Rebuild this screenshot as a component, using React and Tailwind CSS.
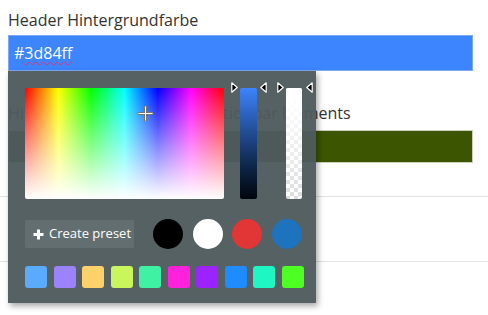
import React from "react";

const squares = ["#5aaaff", "#9b82ff", "#ffd16b", "#c9f75b", "#3ff2a3", "#ff22da", "#9c22ff", "#1e8bff", "#1ef7c3", "#4dff22"];
const circles = ["#000000", "#ffffff", "#e23535", "#1e73be"];

function Arrow({ dir, className }) {
  return (
    <svg width="7" height="11" viewBox="0 0 7 11" className={className}>
      {dir === "right" ? (
        <path d="M0.8 0.8 L6.2 5.5 L0.8 10.2 Z" fill="#000" stroke="#fff" strokeWidth="1.2" strokeLinejoin="round" />
      ) : (
        <path d="M6.2 0.8 L0.8 5.5 L6.2 10.2 Z" fill="#000" stroke="#fff" strokeWidth="1.2" strokeLinejoin="round" />
      )}
    </svg>
  );
}

export default function App() {
  return (
    <div className="relative h-[315px] w-[488px] overflow-hidden bg-white font-['Open_Sans',sans-serif] text-[#333]">
      <div className="px-2 pt-2">
        <div className="h-6 text-[16px] leading-6">Header Hintergrundfarbe</div>
        <div className="mt-[3px] flex h-9 w-[465px] items-center border border-[#7eaaf5] bg-[#3d84ff] px-[5px] text-[16px] text-white">
          #<span className="underline decoration-[#d9367a] decoration-wavy decoration-1 underline-offset-2">3d84ff</span>
        </div>
        <div className="mt-[30px] h-6 whitespace-nowrap text-[16px] leading-6">Hintergrundfarbe der Navigationbar Elements</div>
        <div className="mt-[5px] h-[33px] w-[465px] border border-[#c9d2b8] bg-[#3b5501]" />
      </div>
      <div className="mt-[33px] h-px bg-[#e2e2e2]" />
      <div className="mt-16 h-px bg-[#e2e2e2]" />

      <div className="absolute left-2 top-[71px] flex h-[232px] w-[308px] flex-col bg-[#4f5b5e]/[0.96] pl-[17px] pr-[14px] pt-[17px] shadow-[2px_3px_6px_rgba(0,0,0,0.35)]">
        <div className="flex h-[111px]">
          <div className="relative h-[111px] w-[199px] rounded-[2px] bg-[linear-gradient(to_right,#ff0000,#ffff00,#00ff00,#00ffff,#0000ff,#ff00ff,#ff0000)]">
            <div className="absolute inset-0 rounded-[2px] bg-linear-to-b from-transparent to-white" />
            <svg width="15" height="15" viewBox="0 0 15 15" className="absolute left-[113px] top-[18px]">
              <path d="M7.5 0 V15 M0 7.5 H15" stroke="#777" strokeWidth="3" />
              <path d="M7.5 0.5 V14.5 M0.5 7.5 H14.5" stroke="#fff" strokeWidth="1" />
            </svg>
          </div>
          <div className="relative ml-4 h-[111px] w-[17px] rounded-[2px] bg-linear-to-b from-[#3d84ff] to-[#02060d]">
            <Arrow dir="right" className="absolute -left-[9px] -top-[6px]" />
            <Arrow dir="left" className="absolute -right-[10px] -top-[6px]" />
          </div>
          <div className="relative ml-[29px] h-[111px] w-4 rounded-[2px] bg-[repeating-conic-gradient(#dcdcdc_0%_25%,#ffffff_0%_50%)] bg-[length:8px_8px]">
            <div className="absolute inset-0 rounded-[2px] bg-linear-to-b from-white from-10% to-transparent" />
            <Arrow dir="right" className="absolute -left-[9px] -top-[6px]" />
            <Arrow dir="left" className="absolute -right-[11px] -top-[6px]" />
          </div>
        </div>
        <div className="mt-5 flex h-[30px] items-center">
          <div className="flex h-7 w-[109px] items-center gap-[5px] rounded-[2px] bg-[#636e71] pl-2 text-[13px] text-white">
            <svg width="11" height="11" viewBox="0 0 11 11">
              <path d="M5.5 0.5 V10.5 M0.5 5.5 H10.5" stroke="#fff" strokeWidth="3" />
            </svg>
            <span>Create preset</span>
          </div>
          <div className="ml-[19px] flex gap-[9.5px]">
            {circles.map((c) => (
              <div key={c} className="h-[30px] w-[30px] rounded-full" style={{ backgroundColor: c }} />
            ))}
          </div>
        </div>
        <div className="mt-[17px] flex w-[279px] justify-between">
          {squares.map((c) => (
            <div key={c} className="h-[22px] w-[22px] rounded-[3px]" style={{ backgroundColor: c }} />
          ))}
        </div>
      </div>
    </div>
  );
}
